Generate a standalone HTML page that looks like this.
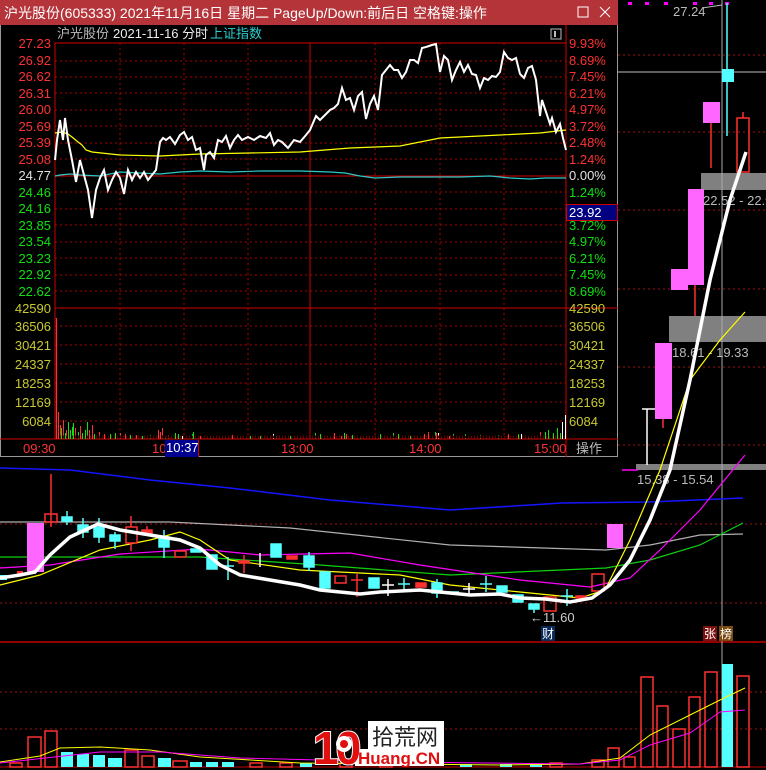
<!DOCTYPE html>
<html><head><meta charset="utf-8"><style>
html,body{margin:0;padding:0;background:#000;}
svg{display:block;}
text{font-family:"Liberation Sans","Noto Sans CJK SC",sans-serif;}
</style></head><body>
<svg width="766" height="770" viewBox="0 0 766 770" xmlns="http://www.w3.org/2000/svg">
<rect width="766" height="770" fill="#000"/>
<g stroke="#a01010" stroke-dasharray="2,3" stroke-width="1">
<line x1="618" y1="55" x2="766" y2="55"/><line x1="618" y1="132" x2="766" y2="132"/>
<line x1="618" y1="210" x2="766" y2="210"/><line x1="618" y1="289" x2="766" y2="289"/>
<line x1="618" y1="367" x2="766" y2="367"/><line x1="618" y1="445" x2="766" y2="445"/>
<line x1="0" y1="524" x2="766" y2="524"/><line x1="0" y1="603" x2="766" y2="603"/>
<line x1="0" y1="692" x2="766" y2="692"/><line x1="0" y1="729" x2="766" y2="729"/>
</g>
<line x1="0" y1="642" x2="766" y2="642" stroke="#c00000" stroke-width="1.5"/>
<line x1="0" y1="767" x2="766" y2="767" stroke="#c00000" stroke-width="1"/>
<line x1="618" y1="72" x2="766" y2="72" stroke="#bbb" stroke-width="1"/>
<rect x="701" y="173" width="65" height="17" fill="#808080"/>
<rect x="669" y="316" width="97" height="26" fill="#808080"/>
<rect x="636" y="464" width="130" height="6" fill="#808080"/>
<line x1="722" y1="0" x2="722" y2="642" stroke="#aaa" stroke-width="1"/>
<line x1="722" y1="642" x2="722" y2="767" stroke="#aaa" stroke-width="1"/>
<text x="703" y="205" fill="#bbb" font-size="13">22.52 - 22.9</text>
<text x="672" y="357" fill="#bbb" font-size="13">18.61 - 19.33</text>
<text x="637" y="484" fill="#bbb" font-size="13">15.38 - 15.54</text>
<text x="673" y="16" fill="#bbb" font-size="13">27.24</text>
<line x1="702" y1="8" x2="722" y2="5" stroke="#bbb"/>
<g fill="#f0f"><rect x="628" y="2" width="4" height="3"/><rect x="645" y="2" width="4" height="3"/><rect x="664" y="2" width="4" height="3"/><rect x="693" y="2" width="4" height="3"/><rect x="709" y="2" width="4" height="3"/><rect x="725" y="2" width="4" height="3"/></g>
<g fill="none" stroke-width="1.2">
<polyline stroke="#1414ff" stroke-width="1.5" points="0,468 70,470 150,480 230,488 330,500 450,510 562,503 650,502 743,498"/>
<polyline stroke="#b0b0b0" points="0,522 170,522 290,528 450,545 606,550 650,545 700,535 743,534"/>
<polyline stroke="#10d010" points="0,557 200,557 320,565 450,575 606,568 650,560 700,545 743,523"/>
<polyline stroke="#f0f" points="0,568 50,565 120,554 200,549 260,555 350,553 420,565 520,580 590,587 630,578 660,550 700,510 745,455"/>
<polyline stroke="#ff0" points="0,585 40,575 100,550 150,540 180,532 200,540 230,560 300,570 400,575 450,585 520,592 580,598 605,590 630,540 660,470 690,380 720,340 745,312"/>
</g>
<g stroke-width="1.5">
<rect x="27" y="523" width="17" height="49" fill="#ff66ff"/>
<rect x="0" y="575" width="7" height="5" fill="#54ffff"/>
<rect x="17" y="571" width="6" height="3" fill="#ff3030"/>
<line x1="51" y1="474" x2="51" y2="527" stroke="#ff3030"/><rect x="45" y="514" width="12" height="8" fill="none" stroke="#ff3030"/>
<g fill="#54ffff" stroke="#54ffff">
<rect x="62" y="517" width="10" height="4"/><line x1="67" y1="511" x2="67" y2="525"/>
<rect x="78" y="525" width="10" height="7"/><line x1="83" y1="518" x2="83" y2="538"/>
<rect x="94" y="527" width="10" height="10"/><line x1="99" y1="518" x2="99" y2="543"/>
<rect x="110" y="535" width="10" height="6"/><line x1="115" y1="532" x2="115" y2="549"/>
<rect x="159" y="537" width="10" height="10"/><line x1="164" y1="530" x2="164" y2="558"/>
<rect x="191" y="549" width="10" height="3"/>
<rect x="207" y="555" width="10" height="14"/>
<line x1="222" y1="566" x2="234" y2="566"/><line x1="228" y1="557" x2="228" y2="580"/>
<rect x="271" y="544" width="10" height="13"/>
<rect x="304" y="556" width="10" height="11"/><line x1="309" y1="552" x2="309" y2="571"/>
<rect x="320" y="572" width="10" height="16"/>
<rect x="369" y="578" width="10" height="10"/>
<line x1="398" y1="584" x2="410" y2="584"/><line x1="404" y1="578" x2="404" y2="590"/>
<rect x="432" y="583" width="10" height="10"/><line x1="437" y1="579" x2="437" y2="598"/>
<line x1="447" y1="592" x2="459" y2="592"/>
<line x1="480" y1="584" x2="492" y2="584"/><line x1="486" y1="576" x2="486" y2="592"/>
<rect x="497" y="586" width="10" height="6"/>
<rect x="513" y="595" width="10" height="7"/>
<rect x="529" y="604" width="10" height="5"/><line x1="534" y1="604" x2="534" y2="613"/>
<line x1="561" y1="596" x2="573" y2="596"/><line x1="567" y1="589" x2="567" y2="606"/>
</g>
<g stroke="#ff3030" fill="none">
<rect x="126" y="527" width="11" height="16"/><line x1="131" y1="516" x2="131" y2="527"/><line x1="131" y1="543" x2="131" y2="551"/>
<rect x="142" y="530" width="10" height="3" fill="#ff3030"/><line x1="147" y1="526" x2="147" y2="535"/>
<rect x="175" y="551" width="11" height="6"/>
<rect x="239" y="561" width="10" height="2" fill="#ff3030"/><line x1="244" y1="555" x2="244" y2="573"/>
<rect x="287" y="556" width="10" height="3" fill="#ff3030"/>
<rect x="335" y="576" width="11" height="7"/>
<line x1="351" y1="580" x2="363" y2="580"/><line x1="357" y1="574" x2="357" y2="597"/>
<rect x="416" y="583" width="10" height="4" fill="#ff3030"/>
<rect x="544" y="597" width="12" height="14"/>
<rect x="576" y="596" width="10" height="2" fill="#ff3030"/>
<rect x="592" y="574" width="12" height="17"/>
</g>
<line x1="260" y1="553" x2="260" y2="567" stroke="#fff"/>
<line x1="388" y1="579" x2="388" y2="596" stroke="#fff"/><line x1="382" y1="585" x2="394" y2="585" stroke="#fff"/>
<line x1="469" y1="583" x2="469" y2="596" stroke="#fff"/><line x1="463" y1="589" x2="475" y2="589" stroke="#fff"/>
<rect x="607" y="524" width="16" height="24" fill="#ff66ff"/>
<line x1="642" y1="409" x2="656" y2="409" stroke="#fff"/><line x1="647" y1="409" x2="647" y2="465" stroke="#fff"/>
<line x1="622" y1="470" x2="638" y2="470" stroke="#f0f"/>
<rect x="655" y="343" width="17" height="76" fill="#ff66ff"/><line x1="663" y1="419" x2="663" y2="428" stroke="#ff3030"/>
<rect x="671" y="269" width="17" height="21" fill="#ff66ff"/>
<rect x="688" y="189" width="16" height="96" fill="#ff66ff"/><line x1="695" y1="285" x2="695" y2="316" stroke="#ff3030"/>
<rect x="703" y="102" width="17" height="21" fill="#ff66ff"/><line x1="711" y1="123" x2="711" y2="168" stroke="#ff3030"/>
<line x1="727" y1="3" x2="727" y2="136" stroke="#54ffff"/><rect x="722" y="69" width="12" height="13" fill="#54ffff"/>
<rect x="737" y="118" width="12" height="54" fill="none" stroke="#ff3030"/><line x1="743" y1="112" x2="743" y2="118" stroke="#ff3030"/>
</g>
<polyline fill="none" stroke="#fff" stroke-width="3.5" points="0,578 20,575 35,572 50,555 70,537 98,524 120,530 150,535 180,540 200,548 220,565 240,575 270,580 300,585 320,590 360,594 380,592 420,590 440,592 470,595 500,594 520,598 545,599 570,602 592,598 610,585 630,560 650,520 670,470 690,380 710,280 730,200 746,152"/>
<text x="530" y="622" fill="#ccc" font-size="13">←11.60</text>
<rect x="541" y="626" width="14" height="15" fill="#0a2a5a"/><text x="542" y="638" fill="#fff" font-size="12">财</text>
<rect x="703" y="626" width="14" height="15" fill="#7a1010"/><text x="704" y="638" fill="#fff" font-size="12">张</text>
<rect x="719" y="626" width="14" height="15" fill="#7a4a10"/><text x="720" y="638" fill="#fff" font-size="12">榜</text>
<g stroke="#ff3030" stroke-width="1.5" fill="none">
<rect x="28" y="737" width="13" height="30"/><rect x="45" y="731" width="12" height="36"/>
<rect x="125" y="750" width="13" height="17"/><rect x="142" y="756" width="12" height="11"/>
<rect x="173" y="761" width="14" height="6"/><rect x="592" y="760" width="12" height="7"/>
<rect x="608" y="748" width="11" height="19"/><rect x="624" y="757" width="11" height="10"/>
<rect x="641" y="677" width="12" height="90"/><rect x="657" y="706" width="11" height="61"/>
<rect x="673" y="729" width="12" height="38"/><rect x="689" y="697" width="11" height="70"/>
<rect x="705" y="672" width="12" height="95"/><rect x="737" y="676" width="12" height="91"/>
<rect x="10" y="763" width="12" height="4"/><rect x="250" y="763" width="12" height="4"/><rect x="280" y="763" width="12" height="4"/><rect x="340" y="763" width="12" height="4"/><rect x="380" y="763" width="12" height="4"/><rect x="550" y="763" width="12" height="4"/>
</g>
<g fill="#54ffff">
<rect x="61" y="752" width="12" height="15"/><rect x="77" y="754" width="12" height="13"/><rect x="93" y="755" width="12" height="12"/><rect x="108" y="758" width="14" height="9"/><rect x="158" y="758" width="13" height="9"/>
<rect x="190" y="762" width="12" height="5"/><rect x="206" y="762" width="12" height="5"/><rect x="222" y="762" width="12" height="5"/><rect x="300" y="763" width="12" height="4"/><rect x="460" y="764" width="12" height="3"/><rect x="500" y="764" width="12" height="3"/><rect x="530" y="764" width="12" height="3"/>
<rect x="722" y="664" width="11" height="103"/>
</g>
<polyline fill="none" stroke="#ff0" stroke-width="1" points="0,762 40,756 60,748 100,747 150,750 200,757 300,763 500,765 580,764 620,758 650,735 690,715 720,700 745,688"/>
<polyline fill="none" stroke="#f0f" stroke-width="1" points="0,763 100,752 160,752 240,758 400,762 580,764 620,760 650,745 690,733 720,712 745,710"/>
<!-- watermark -->
<rect x="368" y="721" width="76" height="30" fill="#fff"/>
<rect x="355" y="749" width="89" height="17" fill="#fff"/>
<text x="313" y="764" fill="#e01010" stroke="#fff" stroke-width="2" paint-order="stroke" font-size="46" font-weight="bold" letter-spacing="-3">10</text>
<circle cx="344" cy="744" r="8" fill="#fff"/><circle cx="344" cy="744" r="4" fill="#e01010"/>
<text x="372" y="745" fill="#222" font-size="22">拾荒网</text>
<text x="358" y="764" fill="#e01010" font-size="17" font-weight="bold">Huang.CN</text>

<rect x="0" y="0" width="618" height="457" fill="#000"/>
<rect x="0.5" y="0.5" width="617" height="456" fill="none" stroke="#999"/>
<rect x="0" y="0" width="618" height="25" fill="#b5343a"/>
<text x="4" y="18" fill="#fff" font-size="14">沪光股份(605333) 2021年11月16日 星期二 PageUp/Down:前后日 空格键:操作</text>
<rect x="578" y="7" width="10" height="10" fill="none" stroke="#fff"/>
<path d="M600 7 L610 17 M610 7 L600 17" stroke="#fff" stroke-width="1"/>
<text x="57" y="38" fill="#bbb" font-size="13">沪光股份</text>
<text x="113" y="38" fill="#eee" font-size="13">2021-11-16 分时</text>
<text x="210" y="38" fill="#2ccfcf" font-size="13">上证指数</text>
<rect x="551" y="29" width="10" height="10" fill="none" stroke="#bbb"/><line x1="555" y1="31" x2="555" y2="37" stroke="#bbb" stroke-width="2"/>
<g stroke="#b00000" stroke-dasharray="2,3" stroke-width="1">
<line x1="55" y1="61" x2="566" y2="61"/><line x1="55" y1="77" x2="566" y2="77"/><line x1="55" y1="93" x2="566" y2="93"/><line x1="55" y1="110" x2="566" y2="110"/><line x1="55" y1="126" x2="566" y2="126"/><line x1="55" y1="143" x2="566" y2="143"/><line x1="55" y1="159" x2="566" y2="159"/>
<line x1="55" y1="192" x2="566" y2="192"/><line x1="55" y1="209" x2="566" y2="209"/><line x1="55" y1="225" x2="566" y2="225"/><line x1="55" y1="242" x2="566" y2="242"/><line x1="55" y1="258" x2="566" y2="258"/><line x1="55" y1="275" x2="566" y2="275"/><line x1="55" y1="291" x2="566" y2="291"/>
<line x1="55" y1="326" x2="566" y2="326"/><line x1="55" y1="345" x2="566" y2="345"/><line x1="55" y1="364" x2="566" y2="364"/><line x1="55" y1="383" x2="566" y2="383"/><line x1="55" y1="402" x2="566" y2="402"/><line x1="55" y1="421" x2="566" y2="421"/>
<line x1="120" y1="43" x2="120" y2="439"/><line x1="184" y1="43" x2="184" y2="439"/><line x1="248" y1="43" x2="248" y2="439"/><line x1="375" y1="43" x2="375" y2="439"/><line x1="440" y1="43" x2="440" y2="439"/><line x1="504" y1="43" x2="504" y2="439"/>
</g>
<g stroke="#d00000" stroke-width="1" fill="none">
<rect x="55" y="43" width="511" height="396"/>
<line x1="566" y1="25" x2="566" y2="457"/>
<line x1="310" y1="43" x2="310" y2="439"/>
<line x1="55" y1="308" x2="566" y2="308"/>
<line x1="566" y1="308" x2="618" y2="308"/>
<line x1="0" y1="439" x2="618" y2="439"/>
</g>
<line x1="56.5" y1="318" x2="56.5" y2="439" stroke="#ff3030" stroke-width="1.2"/>
<g stroke-width="1">
<path stroke="#ff3030" d="M58.5 412V439M60.5 425V439M63.5 420V439M66.5 430V439M75.5 428V439M80.5 426V439M89.5 430V439M92.5 425V439M99.5 432V439M104.5 434V439M120.5 433V439M125.5 434V439M136.5 435V439M158.5 430V439M160.5 432V439M162.5 428V439M168.5 435V439M200.5 436V439M232.5 435V439M240.5 436V439M276.5 436V439M300.5 437V439M334.5 433V439M341.5 436V439M346.5 434V439M424.5 434V439M428.5 432V439M436.5 433V439M449.5 436V439M508.5 434V439M540.5 432V439"/>
<path stroke="#10e010" d="M61.5 428V439M65.5 433V439M68.5 422V439M70.5 430V439M72.5 427V439M73.5 423V439M78.5 432V439M82.5 433V439M85.5 430V439M87.5 422V439M94.5 434V439M110.5 434V439M115.5 433V439M130.5 435V439M142.5 436V439M150.5 435V439M165.5 436V439M175.5 433V439M178.5 434V439M192.5 434V439M193.5 432V439M210.5 436V439M250.5 436V439M260.5 436V439M290.5 436V439M315.5 433V439M320.5 434V439M344.5 433V439M352.5 435V439M360.5 436V439M380.5 434V439M393.5 433V439M398.5 434V439M410.5 436V439M435.5 432V439M453.5 434V439M465.5 434V439M480.5 435V439M498.5 435V439M518.5 434V439M528.5 436V439M545.5 432V439M548.5 430V439M553.5 433V439M557.5 428V439M560.5 433V439"/>
<path stroke="#fff" d="M182.5 436V439M273.5 434V439M438.5 433V439M521.5 434V439M562.5 422V439M565.5 415V439"/>
</g>
<path d="M57 437 H566" stroke="#600" stroke-width="3" stroke-dasharray="1,2"/>
<line x1="55" y1="176" x2="566" y2="176" stroke="#d00000" stroke-width="1"/>
<polyline fill="none" stroke="#2cc8c8" stroke-width="1.2" points="55,176 60,175 70,174 80,175 100,176 120,172 140,173 160,174 180,172 200,171 230,172 260,171 300,171 330,172 345,173 360,176 375,178 400,177 430,177 460,177 490,176 510,178 530,179 545,178 566,178"/>
<polyline fill="none" stroke="#ff0" stroke-width="1.2" points="55,133 62,132 68,134 72,137 78,142 82,145 86,150 92,152 120,155 160,156 200,154 250,153 300,152 350,148 400,146 440,138 500,135 540,133 566,130"/>
<polyline fill="none" stroke="#fff" stroke-width="2" points="55,160 57,140 60,120 63,140 65,118 68,140 72,160 76,182 80,160 84,175 88,190 92,218 96,190 100,178 104,170 108,190 112,180 116,172 120,178 124,194 128,170 132,180 136,172 140,178 144,172 148,180 152,175 156,170 160,142 163,138 166,140 170,137 175,144 180,135 184,132 188,140 192,137 196,150 200,148 204,170 206,155 210,152 214,158 218,140 222,142 226,136 230,148 234,140 238,135 242,140 248,137 254,140 260,136 266,138 270,133 274,145 278,140 282,142 288,148 294,140 300,142 306,135 310,130 316,116 320,120 326,114 330,110 334,108 338,104 342,88 346,100 350,98 354,110 358,96 362,92 366,119 370,104 374,96 378,110 382,75 386,70 390,65 394,70 398,70 402,78 406,72 410,60 414,60 418,63 422,48 426,47 432,45 436,44 440,72 444,56 448,60 452,80 456,70 460,62 464,72 468,65 472,74 476,75 480,88 484,78 488,80 492,76 496,77 500,72 504,52 508,58 512,60 516,58 520,74 524,78 528,68 532,66 536,80 540,116 542,100 546,112 550,124 552,118 556,132 560,124 563,138 566,150"/>
<g font-size="13" text-anchor="end">
<g fill="#ff3232"><text x="51" y="48">27.23</text><text x="51" y="65">26.92</text><text x="51" y="81">26.62</text><text x="51" y="98">26.31</text><text x="51" y="114">26.00</text><text x="51" y="131">25.69</text><text x="51" y="147">25.39</text><text x="51" y="164">25.08</text></g>
<text x="51" y="180" fill="#e0e0e0">24.77</text>
<g fill="#10e010"><text x="51" y="197">24.46</text><text x="51" y="213">24.16</text><text x="51" y="230">23.85</text><text x="51" y="246">23.54</text><text x="51" y="263">23.23</text><text x="51" y="279">22.92</text><text x="51" y="296">22.62</text></g>
<g fill="#c8c832"><text x="51" y="313">42590</text><text x="51" y="331">36506</text><text x="51" y="350">30421</text><text x="51" y="369">24337</text><text x="51" y="388">18253</text><text x="51" y="407">12169</text><text x="51" y="426">6084</text></g>
</g>
<g font-size="13">
<g fill="#ff3232"><text x="569" y="48">9.93%</text><text x="569" y="65">8.69%</text><text x="569" y="81">7.45%</text><text x="569" y="98">6.21%</text><text x="569" y="114">4.97%</text><text x="569" y="131">3.72%</text><text x="569" y="147">2.48%</text><text x="569" y="164">1.24%</text></g>
<text x="569" y="180" fill="#e0e0e0">0.00%</text>
<g fill="#10e010"><text x="569" y="197">1.24%</text><text x="569" y="230">3.72%</text><text x="569" y="246">4.97%</text><text x="569" y="263">6.21%</text><text x="569" y="279">7.45%</text><text x="569" y="296">8.69%</text></g>
<rect x="566.5" y="204.5" width="51" height="16" fill="#000080" stroke="#d00000"/>
<text x="569" y="217" fill="#fff">23.92</text>
<g fill="#c8c832"><text x="569" y="313">42590</text><text x="569" y="331">36506</text><text x="569" y="350">30421</text><text x="569" y="369">24337</text><text x="569" y="388">18253</text><text x="569" y="407">12169</text><text x="569" y="426">6084</text></g>
</g>
<g font-size="13" fill="#ff3232">
<text x="23" y="453">09:30</text><text x="152" y="453">10</text><text x="281" y="453">13:00</text><text x="409" y="453">14:00</text><text x="534" y="453">15:00</text>
</g>
<rect x="165" y="440" width="33" height="17" fill="#000090"/>
<line x1="198.5" y1="440" x2="198.5" y2="457" stroke="#d00000"/>
<text x="166" y="452" fill="#fff" font-size="13">10:37</text>
<text x="576" y="453" fill="#bbb" font-size="13">操作</text>
</svg>
</body></html>
